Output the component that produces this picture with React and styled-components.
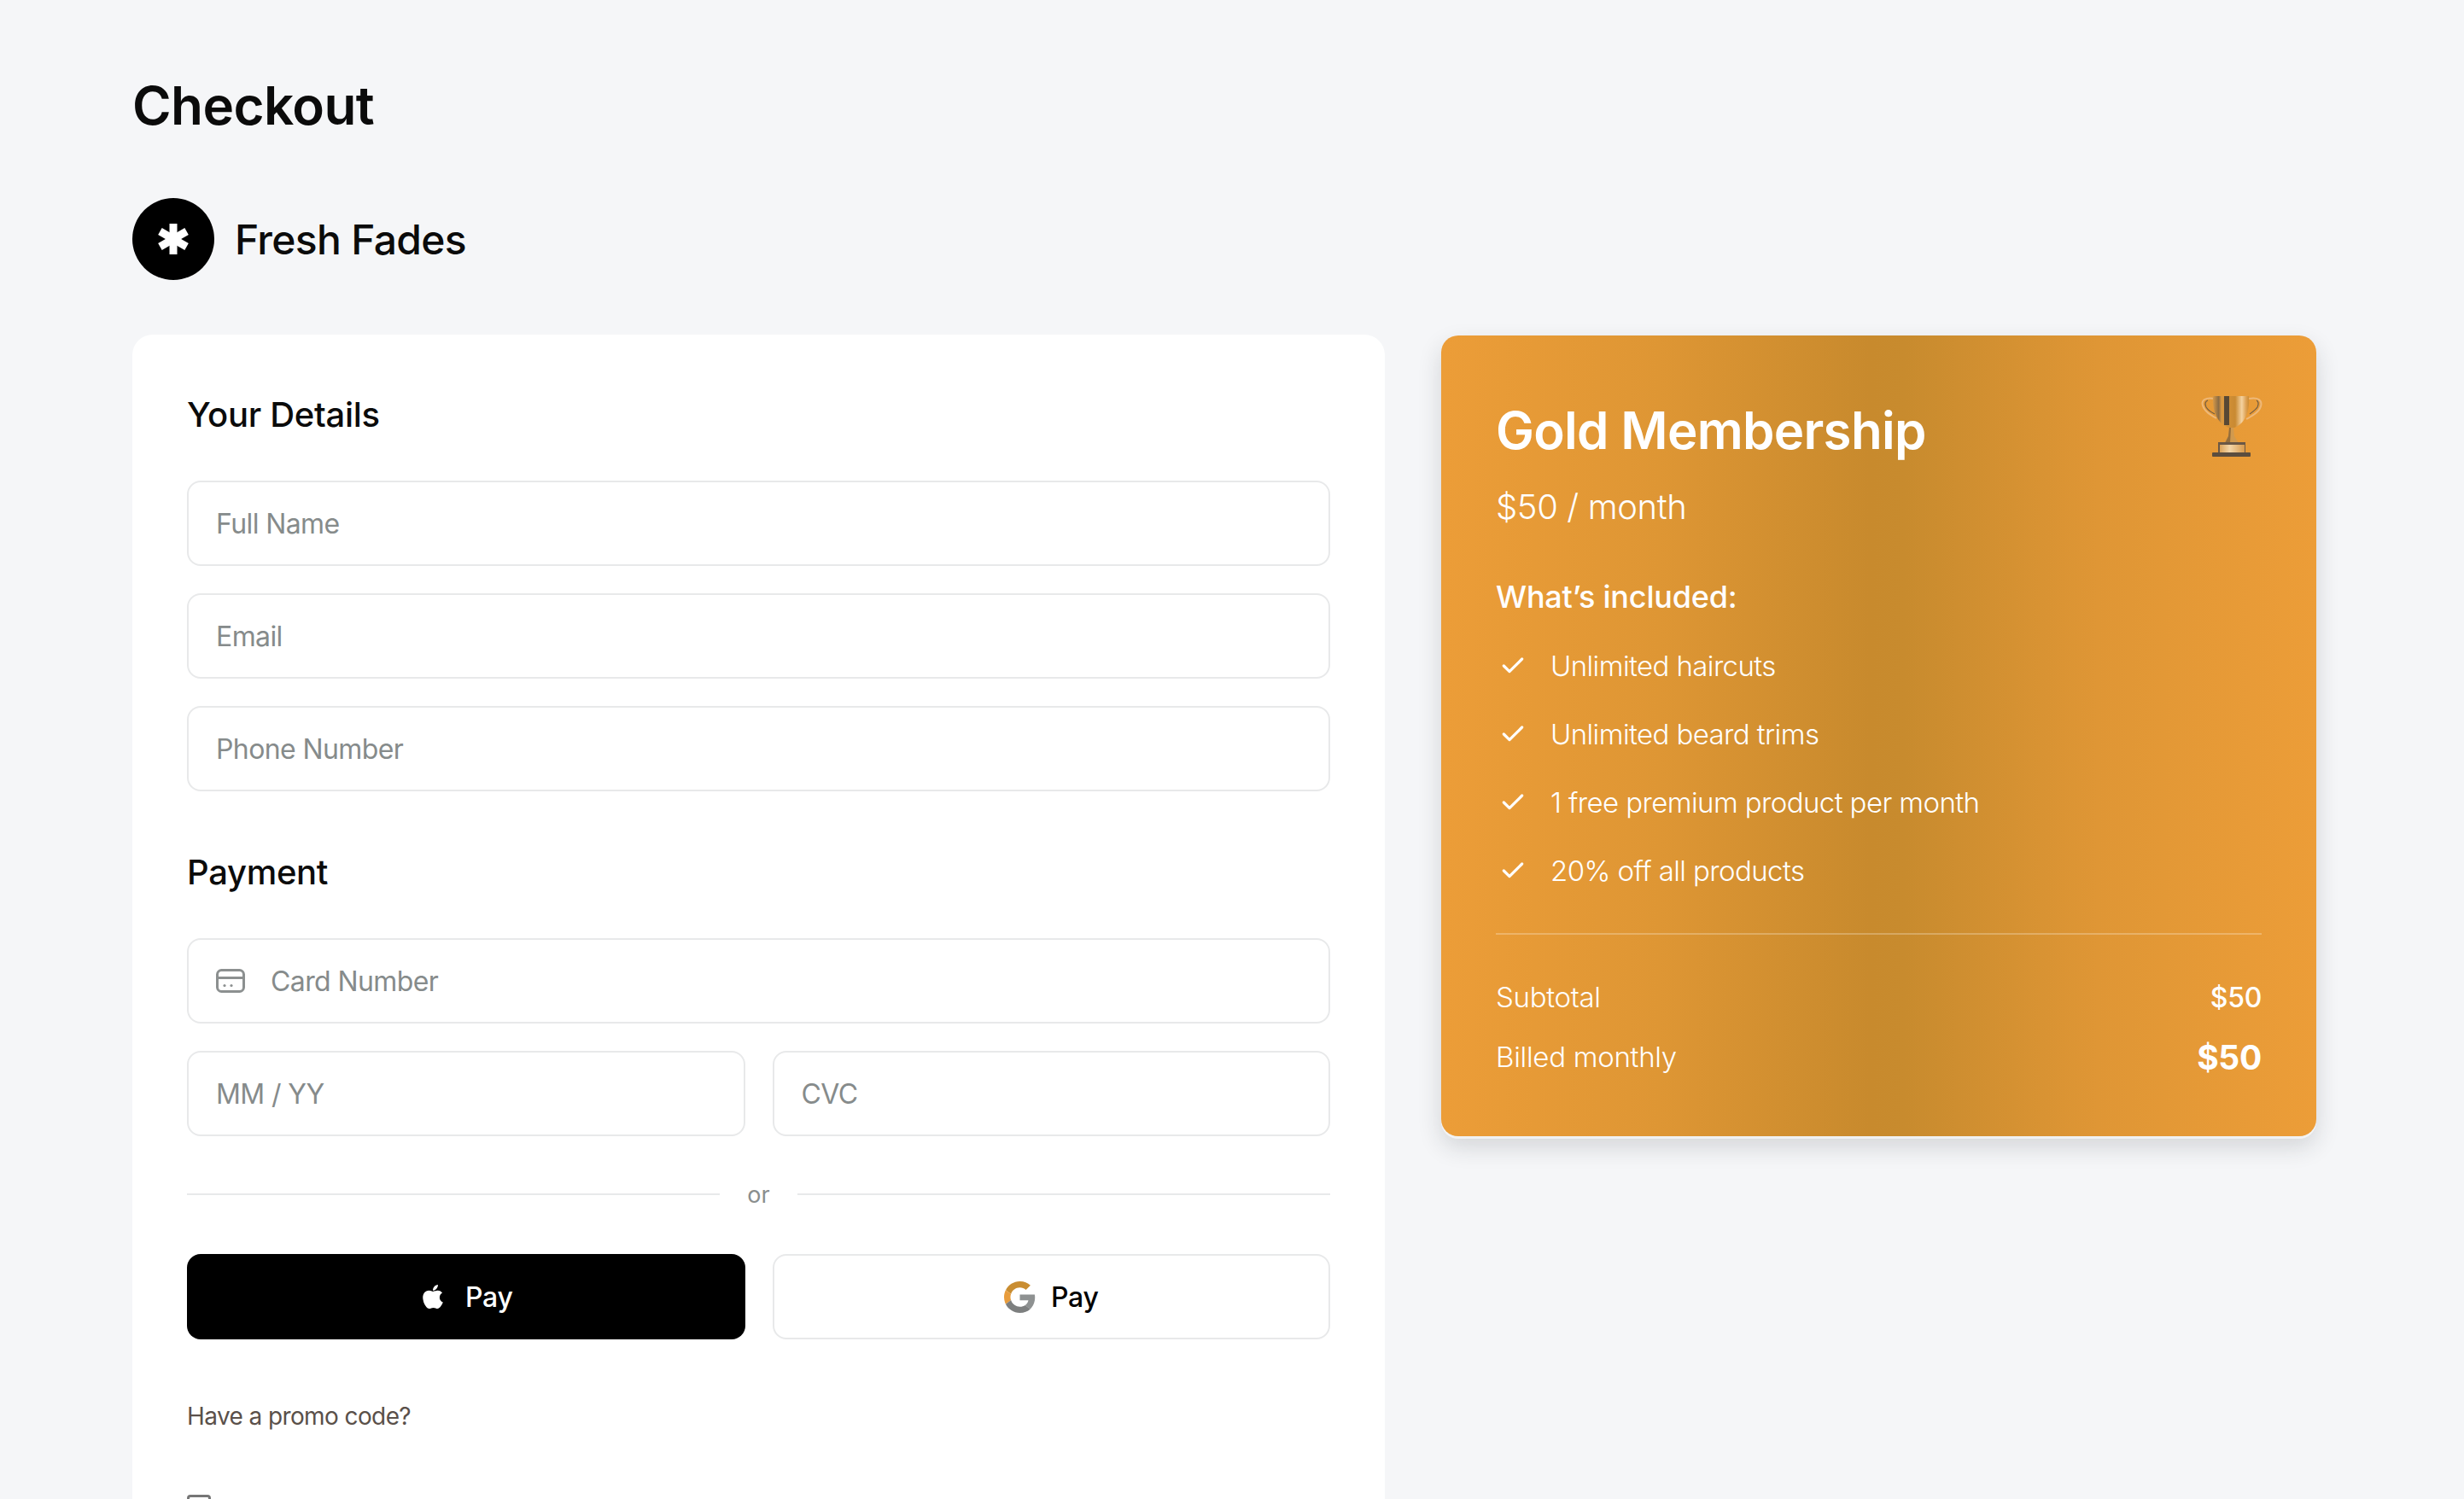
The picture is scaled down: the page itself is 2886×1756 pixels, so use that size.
import React from "react";
import styled, { createGlobalStyle } from "styled-components";
import { FaApple } from "react-icons/fa";
import { Check } from "lucide-react";

const Global = createGlobalStyle`
  html, body { margin: 0; padding: 0; background: #f5f6f8; }
  * { box-sizing: border-box; }
  body { font-family: Inter, "Noto Sans", sans-serif; color: #0b0b0b; }
`;

const Page = styled.div`
  height: 100vh;
  overflow: hidden;
  padding: 88px 173px 0 155px;
`;
const Title = styled.h1`
  margin: 0;
  font-size: 62px;
  line-height: 72px;
  font-weight: 600;
  letter-spacing: -0.6px;
`;
const Brand = styled.div`
  display: flex;
  align-items: center;
  gap: 24px;
  margin-top: 72px;
`;
const BrandMark = styled.div`
  width: 96px;
  height: 96px;
  border-radius: 50%;
  background: #000;
  display: flex;
  align-items: center;
  justify-content: center;
`;
const BrandName = styled.div`
  font-size: 48px;
  font-weight: 500;
  letter-spacing: -0.7px;
`;
const Columns = styled.div`
  display: grid;
  grid-template-columns: 1467px 1025px;
  gap: 66px;
  margin-top: 64px;
  align-items: start;
`;
const FormCard = styled.section`
  background: #fff;
  border-radius: 24px;
  padding: 64px 64px 80px;
`;
const SectionTitle = styled.h2`
  margin: ${(p) => p.$top || 0}px 0 0;
  font-size: 40px;
  line-height: 60px;
  font-weight: 500;
  letter-spacing: -0.3px;
`;
const Fields = styled.div`
  display: flex;
  flex-direction: column;
  gap: 32px;
  margin-top: 47px;
`;
const Input = styled.input`
  width: 100%;
  height: 100px;
  border: 2px solid #e8e9ea;
  border-radius: 16px;
  background: #fff;
  padding: 0 32px;
  font: 400 32px Inter, sans-serif;
  letter-spacing: -0.6px;
  outline: none;
  &::placeholder { color: #868b8b; opacity: 1; }
`;
const IconField = styled.label`
  display: flex;
  align-items: center;
  gap: 30px;
  height: 100px;
  border: 2px solid #e8e9ea;
  border-radius: 16px;
  padding: 0 32px;
  color: #868b8b;
`;
const BareInput = styled.input`
  flex: 1;
  border: 0;
  outline: 0;
  padding: 0;
  background: transparent;
  font: 400 32px Inter, sans-serif;
  letter-spacing: -0.6px;
  &::placeholder { color: #868b8b; opacity: 1; }
`;
const Pair = styled.div`
  display: grid;
  grid-template-columns: 1fr 1fr;
  gap: 32px;
`;
const Or = styled.div`
  display: flex;
  align-items: center;
  gap: 32px;
  margin-top: 48px;
  height: 40px;
  color: #8a8e8e;
  font-size: 27px;
`;
const OrLine = styled.div`
  flex: 1;
  height: 2px;
  background: #e8e9ea;
`;
const PayRow = styled.div`
  display: grid;
  grid-template-columns: 1fr 1fr;
  gap: 32px;
  margin-top: 50px;
`;
const PayButton = styled.button`
  height: 100px;
  border-radius: 16px;
  border: ${(p) => (p.$dark ? "0" : "2px solid #e8e9ea")};
  background: ${(p) => (p.$dark ? "#000" : "#fff")};
  color: ${(p) => (p.$dark ? "#fff" : "#000")};
  display: flex;
  align-items: center;
  justify-content: center;
  gap: ${(p) => (p.$dark ? 22 : 18)}px;
  font: 500 32px Inter, sans-serif;
  letter-spacing: -0.3px;
`;
const Promo = styled.div`
  margin-top: 70px;
  font-size: 28px;
  line-height: 40px;
  letter-spacing: -0.6px;
  color: #5a504a;
`;
const PromoCheck = styled.div`
  width: 28px;
  height: 28px;
  margin-top: 72px;
  border: 3px solid #767676;
  border-radius: 4px;
`;
const PlanCard = styled.aside`
  margin-top: 1px;
  height: 938px;
  border-radius: 20px;
  padding: 73px 64px 0;
  color: #fff;
  background: linear-gradient(90deg, #ec9d38 0%, #de9634 25%, #c88a2d 49%, #c88b2e 53%, #df9635 75%, #ec9d38 100%);
  box-shadow: 0 3px 0 rgba(255,255,255,.6), 0 12px 28px rgba(30,35,45,.16);
`;
const PlanHead = styled.div`
  display: flex;
  justify-content: space-between;
  align-items: flex-start;
`;
const PlanName = styled.div`
  font-size: 60px;
  line-height: 76px;
  font-weight: 600;
  letter-spacing: -0.7px;
`;
const PlanPrice = styled.div`
  margin-top: 22px;
  font-size: 40px;
  line-height: 60px;
  font-weight: 300;
  letter-spacing: -0.4px;
`;
const Included = styled.div`
  margin-top: 50px;
  font-size: 36px;
  line-height: 50px;
  font-weight: 500;
  letter-spacing: -0.2px;
`;
const Perks = styled.ul`
  list-style: none;
  margin: 16px 0 0;
  padding: 0;
  display: flex;
  flex-direction: column;
`;
const Perk = styled.li`
  display: flex;
  align-items: center;
  gap: 28px;
  height: 80px;
  font-size: 33px;
  font-weight: 300;
  letter-spacing: -0.6px;
  padding-left: 4px;
`;
const Divider = styled.div`
  height: 2px;
  background: rgba(255,255,255,.25);
  margin-top: 33px;
`;
const Summary = styled.div`
  display: flex;
  justify-content: space-between;
  align-items: center;
  height: 70px;
  margin-top: ${(p) => p.$top || 0}px;
  font-size: 33px;
  font-weight: 300;
  letter-spacing: -0.3px;
`;
const SummaryValue = styled.span`
  font-size: ${(p) => (p.$big ? 39 : 32)}px;
  font-weight: ${(p) => (p.$big ? 700 : 500)};
`;

const AsteriskMark = () => (
  <svg width="36" height="36" viewBox="0 0 36 36" fill="#fff">
    {[0, 60, 120].map((a) => (
      <rect key={a} x="13.5" y="0" width="9" height="36" transform={`rotate(${a} 18 18)`} />
    ))}
  </svg>
);
const CardIcon = () => (
  <svg width="34" height="28" viewBox="0 0 34 28" fill="none" stroke="#8c9090" strokeWidth="3">
    <rect x="1.5" y="1.5" width="31" height="25" rx="5" />
    <path d="M2 10.5h30" />
    <circle cx="10" cy="19.500" r="1.600" fill="#8c9090" stroke="none" />
    <circle cx="18" cy="19.500" r="1.600" fill="#8c9090" stroke="none" />
  </svg>
);
const GoogleMark = () => (
  <svg width="37" height="37" viewBox="0 0 48 48">
    <path fill="#c98d31" d="M24 9.5c3.5 0 6.7 1.2 9.2 3.6l6.9-6.9C35.9 2.4 30.5 0 24 0 14.6 0 6.5 5.4 2.6 13.2l8 6.2C12.4 13.7 17.7 9.5 24 9.5z" />
    <path fill="#8e9191" d="M47 24.5c0-1.6-.1-3.100-.4-4.500H24v9h12.900c-.6 3-2.200 5.500-4.800 7.200l7.700 6C44.300 37.500 47 31.600 47 24.500z" />
    <path fill="#e89c3c" d="M10.500 28.600c-.5-1.400-.8-3-.8-4.600s.3-3.200.8-4.600l-8-6.200C.9 16.500 0 20.100 0 24s.9 7.500 2.600 10.800l7.900-6.200z" />
    <path fill="#7d7f7f" d="M24 48c6.500 0 11.900-2.100 15.900-5.800l-7.700-6c-2.200 1.400-4.900 2.300-8.200 2.300-6.300 0-11.600-4.200-13.500-9.900l-8 6.200C6.500 42.600 14.600 48 24 48z" />
  </svg>
);
const Trophy = () => (
  <svg width="72" height="74" viewBox="0 0 72 74" style={{ marginTop: -3, marginRight: -1 }}>
    <defs>
      <linearGradient id="cup" x1="0" x2="1" y1="0" y2="0">
        <stop offset="0" stopColor="#d79a48" />
        <stop offset="0.16" stopColor="#8a6b44" />
        <stop offset="0.24" stopColor="#dc9a42" />
        <stop offset="0.42" stopColor="#d08f36" />
        <stop offset="0.62" stopColor="#c98a32" />
        <stop offset="0.8" stopColor="#f4d2a0" />
        <stop offset="0.92" stopColor="#dda052" />
        <stop offset="1" stopColor="#c98a32" />
      </linearGradient>
      <linearGradient id="plinth" x1="0" x2="1" y1="0" y2="0">
        <stop offset="0" stopColor="#dca45a" />
        <stop offset="0.4" stopColor="#f3d6a8" />
        <stop offset="1" stopColor="#d89a4c" />
      </linearGradient>
    </defs>
    <path d="M16 4C5 2 0 6 2 12c2 7 9 11 16 15" fill="none" stroke="#eeb878" strokeWidth="2" />
    <path d="M8 6c-3 1-4 4-2 8 2 3 6 6 10 8" fill="none" stroke="#6e5a44" strokeWidth="1.200" />
    <path d="M56 4c11-2 16 2 14 9-2 7-10 11-17 15" fill="none" stroke="#eeb878" strokeWidth="2" />
    <path d="M65 6c2 1 3 4 1 8-2 3-5 5-9 8" fill="none" stroke="#6e5a44" strokeWidth="1.200" />
    <path d="M14 1h42c1 14-2 31-17 37h-7C17 32 13 15 14 1z" fill="url(#cup)" />
    <rect x="27" y="1" width="6" height="34" fill="#4a4034" opacity=".9" />
    <path d="M33 38h5l1 10 5 8H27l5-8z" fill="#d19a4e" />
    <path d="M33 38h2l-1 18h-6l4-8z" fill="#7b5a32" opacity=".7" />
    <rect x="20" y="55" width="32" height="13" fill="#6b5845" />
    <rect x="22" y="58" width="29" height="10" fill="url(#plinth)" />
    <rect x="13" y="67" width="45" height="5" rx="1" fill="#5b4d3e" />
  </svg>
);

const perks = ["Unlimited haircuts", "Unlimited beard trims", "1 free premium product per month", "20% off all products"];

export default function App() {
  return (
    <Page>
      <Global />
      <Title>Checkout</Title>
      <Brand>
        <BrandMark><AsteriskMark /></BrandMark>
        <BrandName>Fresh Fades</BrandName>
      </Brand>
      <Columns>
        <FormCard>
          <SectionTitle>Your Details</SectionTitle>
          <Fields>
            <Input placeholder="Full Name" />
            <Input placeholder="Email" />
            <Input placeholder="Phone Number" />
          </Fields>
          <SectionTitle $top={65}>Payment</SectionTitle>
          <Fields>
            <IconField><CardIcon /><BareInput placeholder="Card Number" /></IconField>
            <Pair>
              <Input placeholder="MM / YY" />
              <Input placeholder="CVC" />
            </Pair>
          </Fields>
          <Or><OrLine /><span>or</span><OrLine /></Or>
          <PayRow>
            <PayButton $dark><FaApple size={32} />Pay</PayButton>
            <PayButton><GoogleMark />Pay</PayButton>
          </PayRow>
          <Promo>Have a promo code?</Promo>
          <PromoCheck />
        </FormCard>
        <PlanCard>
          <PlanHead>
            <div>
              <PlanName>Gold Membership</PlanName>
              <PlanPrice>$50 / month</PlanPrice>
            </div>
            <Trophy />
          </PlanHead>
          <Included>What’s included:</Included>
          <Perks>
            {perks.map((p) => (
              <Perk key={p}><Check size={32} strokeWidth={2.4} />{p}</Perk>
            ))}
          </Perks>
          <Divider />
          <Summary $top={38}><span>Subtotal</span><SummaryValue>$50</SummaryValue></Summary>
          <Summary><span>Billed monthly</span><SummaryValue $big>$50</SummaryValue></Summary>
        </PlanCard>
      </Columns>
    </Page>
  );
}
